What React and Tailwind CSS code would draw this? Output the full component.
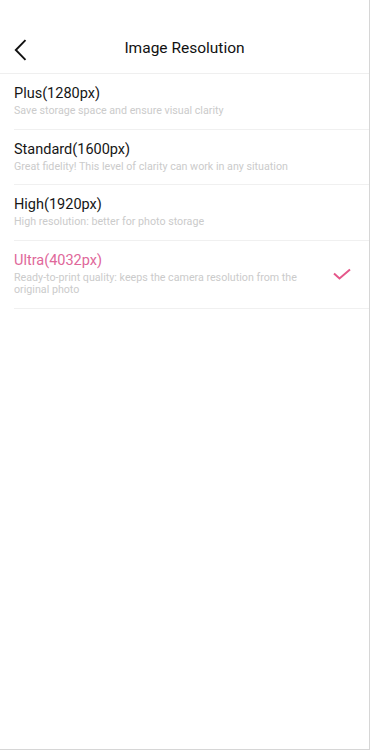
const options = [
  { title: "Plus(1280px)", desc: "Save storage space and ensure visual clarity" },
  { title: "Standard(1600px)", desc: "Great fidelity! This level of clarity can work in any situation" },
  { title: "High(1920px)", desc: "High resolution: better for photo storage" },
  {
    title: "Ultra(4032px)",
    desc: "Ready-to-print quality: keeps the camera resolution from the original photo",
    selected: true,
  },
];

export default function App() {
  return (
    <div
      className="w-[370px] h-[750px] bg-white border-r border-b border-[#d6d6d6] overflow-hidden"
      style={{ fontFamily: "Roboto, 'Noto Sans', sans-serif" }}
    >
      {/* Header */}
      <header className="h-[74px] pt-[24px] border-b border-[#efefef]">
        <div className="relative h-[49px] flex items-center justify-center">
          <button className="absolute left-[10px] top-[14px] w-[20px] h-[24px] flex items-center justify-center">
            <svg viewBox="0 0 14 22" className="w-[14px] h-[22px]" fill="none" stroke="#111" strokeWidth={1.9}>
              <path d="M12.5 1.2 2.8 11l9.7 9.8" />
            </svg>
          </button>
          <h1 className="text-[15.5px] text-[#111]">Image Resolution</h1>
        </div>
      </header>

      {/* Options */}
      <ul className="pl-[14px]">
        {options.map((opt) => (
          <li
            key={opt.title}
            className="flex items-center border-b border-[#f0f0f0] pr-[18px] pt-[11px] pb-[11px]"
          >
            <div className="flex-1 min-w-0 pr-[24px]">
              <p
                className={`text-[14.5px] leading-[18px] ${
                  opt.selected ? "text-[#e0679a]" : "text-[#161616]"
                }`}
              >
                {opt.title}
              </p>
              <p className="mt-[2px] text-[10.7px] leading-[12.5px] text-[#cbcbcb]">{opt.desc}</p>
            </div>
            {opt.selected && (
              <svg viewBox="0 0 18 12" className="w-[18px] h-[12px] shrink-0" fill="none" stroke="#e5578a" strokeWidth={2}>
                <path d="M1 5.5 6.5 10.5 17 1.5" />
              </svg>
            )}
          </li>
        ))}
      </ul>
    </div>
  );
}
